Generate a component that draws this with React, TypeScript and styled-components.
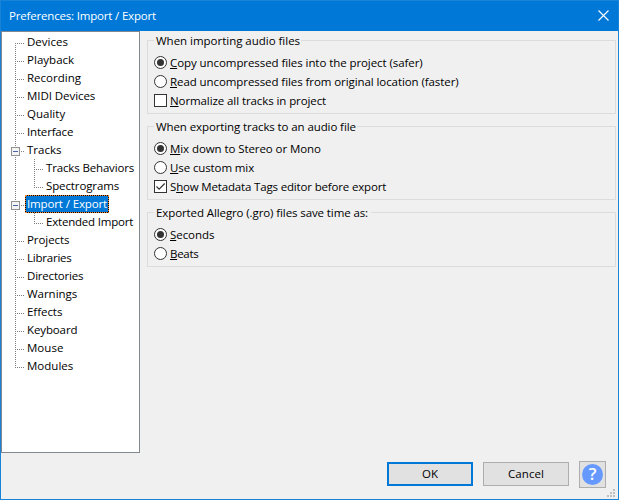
import React from 'react';
import styled, { createGlobalStyle } from 'styled-components';

const GlobalStyle = createGlobalStyle`
  * { box-sizing: border-box; }
  body {
    margin: 0;
    font: 11.5px/18px "Open Sans", "Noto Sans", sans-serif;
    color: #000;
    cursor: default;
  }
  button { font: inherit; color: inherit; padding: 0; }
`;

const Dialog = styled.main`
  width: 619px;
  height: 500px;
  display: flex;
  flex-direction: column;
  background: #f0f0f0;
  border: 1px solid #1883d7;
`;

const TitleBar = styled.header`
  height: 30px;
  flex: none;
  display: flex;
  align-items: center;
  justify-content: space-between;
  padding: 0 9px 1px 8px;
  background: #0078d7;
  color: #fff;
`;

const Text = styled.span<{ $track?: number }>`
  white-space: pre;
  letter-spacing: ${(p) => p.$track ?? 0}px;
`;

const CloseButton = styled.button`
  display: flex;
  margin-bottom: 1px;
  border: 0;
  background: none;
  color: #fff;
`;

const Body = styled.div`
  height: 422px;
  flex: none;
  display: flex;
  gap: 7px;
`;

const Tree = styled.nav`
  width: 139px;
  padding-top: 1px;
  background: #fff;
  border: 1px solid #828790;
`;

const TreeRow = styled.div`
  height: 18px;
  display: flex;
  padding-left: 9px;
`;

const Guides = styled.svg`
  flex: none;
  display: block;
`;

const TreeLabel = styled.span<{ $selected?: boolean }>`
  height: 18px;
  display: flex;
  padding: 0 2px;
  ${(p) =>
    p.$selected &&
    `
    width: 84px;
    background: #0078d7;
    color: #fff;
    box-shadow: inset 0 0 0 1px #000;
    outline: 1px dotted #ff8728;
    outline-offset: -1px;
  `}
`;

const Page = styled.section`
  flex: 1;
  display: flex;
  flex-direction: column;
  gap: 12px;
  padding: 9px 2px 0 0;
`;

const Group = styled.section<{ $height: number }>`
  height: ${(p) => p.$height}px;
  padding: 0 6px;
  border: 1px solid #dcdcdc;
`;

const GroupTitle = styled.h2<{ $width: number }>`
  width: ${(p) => p.$width}px;
  height: 18px;
  margin: -9px 0 3px;
  padding-left: 2px;
  font-size: inherit;
  font-weight: normal;
  background: #f0f0f0;
`;

const Option = styled.label`
  height: 19px;
  display: flex;
  align-items: center;
  gap: 3px;
`;

const Mnemonic = styled.span`
  text-decoration: underline;
  text-decoration-thickness: 1px;
  text-underline-offset: 1px;
  text-decoration-skip-ink: none;
`;

const Footer = styled.footer`
  flex: 1;
  display: flex;
  align-items: flex-start;
  justify-content: flex-end;
  gap: 10px;
  padding-top: 9px;
`;

const PushButton = styled.button<{ $primary?: boolean }>`
  width: 86px;
  height: 24px;
  display: flex;
  align-items: center;
  justify-content: center;
  background: #e1e1e1;
  border: ${(p) => (p.$primary ? '2px solid #0078d7' : '1px solid #adadad')};
`;

const HelpButton = styled(PushButton)`
  width: 27px;
  height: 27px;
  margin-top: -1px;
`;

const HelpBadge = styled.span`
  width: 21px;
  height: 21px;
  border-radius: 50%;
  background: #6699ff;
  color: #fff;
  font-size: 17px;
  font-weight: 600;
  line-height: 20px;
  text-align: center;
`;

const Grip = styled.svg`
  align-self: flex-end;
  margin: 0 3px 2px -9px;
`;

interface Item {
  text: string;
  track: number;
  child?: boolean;
  branch?: boolean;
  selected?: boolean;
  lastChild?: boolean;
}

const items: Item[] = [
  { text: 'Devices', track: 0.01 },
  { text: 'Playback', track: 0.03 },
  { text: 'Recording', track: 0.02 },
  { text: 'MIDI Devices', track: -0.06 },
  { text: 'Quality', track: 0.02 },
  { text: 'Interface', track: -0.17 },
  { text: 'Tracks', track: 0 },
  { text: 'Tracks Behaviors', track: -0.15, child: true },
  { text: 'Spectrograms', track: -0.12, child: true, lastChild: true },
  { text: 'Import / Export', track: -0.13, branch: true, selected: true },
  { text: 'Extended Import', track: -0.2, child: true, lastChild: true },
  { text: 'Projects', track: -0.06 },
  { text: 'Libraries', track: -0.22 },
  { text: 'Directories', track: -0.2 },
  { text: 'Warnings', track: -0.03 },
  { text: 'Effects', track: -0.05 },
  { text: 'Keyboard', track: -0.12 },
  { text: 'Mouse', track: 0.03 },
  { text: 'Modules', track: 0.02 },
].map((item) => (item.text === 'Tracks' ? { ...item, branch: true } : item));

function TreeGuides({ item, first, last }: { item: Item; first: boolean; last: boolean }) {
  const width = item.child ? 33 : 14;
  return (
    <Guides width={width} height={18} shapeRendering="crispEdges">
      <g stroke="#808080" strokeDasharray="1 1" fill="none">
        <path d={`M4.5 ${first ? 10 : 0}V${last ? 11 : 18}`} />
        {item.child && <path d={`M23.5 0V${item.lastChild ? 11 : 18}`} />}
        <path d={item.child ? 'M23 10.5h9' : 'M4 10.5h9'} />
      </g>
      {item.branch && (
        <>
          <rect x={0.5} y={6.5} width={8} height={8} fill="#f4f4f4" stroke="#919191" />
          <path d="M2 10.5h5" stroke="#4b63a7" />
        </>
      )}
    </Guides>
  );
}

function Mark({ kind, on }: { kind: 'radio' | 'check'; on?: boolean }) {
  return (
    <svg width={13} height={13} viewBox="0 0 13 13">
      {kind === 'radio' ? (
        <>
          <circle cx={6.5} cy={6.5} r={6} fill="#fff" stroke="#333" />
          {on && <circle cx={6.5} cy={6.5} r={3.5} fill="#333" />}
        </>
      ) : (
        <>
          <rect x={0.5} y={0.5} width={12} height={12} fill="#fff" stroke="#333" />
          {on && <path d="M2.5 6.5L5.1 9.1L10.7 3.5" fill="none" stroke="#333" strokeWidth={1.2} />}
        </>
      )}
    </svg>
  );
}

interface Choice {
  kind: 'radio' | 'check';
  on?: boolean;
  before?: string;
  key: string;
  after: string;
  track: number;
}

const groups: { title: string; track: number; width: number; height: number; choices: Choice[] }[] = [
  {
    title: 'When importing audio files', track: -0.02, width: 147, height: 74,
    choices: [
      { kind: 'radio', on: true, key: 'C', after: 'opy uncompressed files into the project (safer)', track: -0.075 },
      { kind: 'radio', key: 'R', after: 'ead uncompressed files from original location (faster)', track: -0.08 },
      { kind: 'check', key: 'N', after: 'ormalize all tracks in project', track: -0.09 },
    ],
  },
  {
    title: 'When exporting tracks to an audio file', track: -0.1, width: 203, height: 74,
    choices: [
      { kind: 'radio', on: true, key: 'M', after: 'ix down to Stereo or Mono', track: -0.08 },
      { kind: 'radio', key: 'U', after: 'se custom mix', track: -0.11 },
      { kind: 'check', on: true, before: 'S', key: 'h', after: 'ow Metadata Tags editor before export', track: -0.165 },
    ],
  },
  {
    title: 'Exported Allegro (.gro) files save time as:', track: -0.1, width: 217, height: 55,
    choices: [
      { kind: 'radio', on: true, key: 'S', after: 'econds', track: -0.06 },
      { kind: 'radio', key: 'B', after: 'eats', track: -0.3 },
    ],
  },
];

export default function App() {
  return (
    <>
      <GlobalStyle />
      <Dialog>
        <TitleBar>
          <Text $track={-0.18}>Preferences: Import / Export</Text>
          <CloseButton aria-label="Close">
            <svg width={11} height={11} viewBox="0 0 11 11">
              <path d="M.5 .5l10 10M10.5 .5l-10 10" stroke="currentColor" strokeWidth={1.1} />
            </svg>
          </CloseButton>
        </TitleBar>
        <Body>
          <Tree>
            {items.map((item, i) => (
              <TreeRow key={item.text}>
                <TreeGuides item={item} first={i === 0} last={i === items.length - 1} />
                <TreeLabel $selected={item.selected}>
                  <Text $track={item.track}>{item.text}</Text>
                </TreeLabel>
              </TreeRow>
            ))}
          </Tree>
          <Page>
            {groups.map((g) => (
              <Group key={g.title} $height={g.height}>
                <GroupTitle $width={g.width}>
                  <Text $track={g.track}>{g.title}</Text>
                </GroupTitle>
                {g.choices.map((c) => (
                  <Option key={c.after}>
                    <Mark kind={c.kind} on={c.on} />
                    <Text $track={c.track}>
                      {c.before}
                      <Mnemonic>{c.key}</Mnemonic>
                      {c.after}
                    </Text>
                  </Option>
                ))}
              </Group>
            ))}
          </Page>
        </Body>
        <Footer>
          <PushButton $primary>
            <Text>OK</Text>
          </PushButton>
          <PushButton>
            <Text $track={0.1}>Cancel</Text>
          </PushButton>
          <HelpButton aria-label="Help">
            <HelpBadge>?</HelpBadge>
          </HelpButton>
          <Grip width={8} height={8} fill="#bfbfbf" shapeRendering="crispEdges">
            <path d="M6 0h2v2h-2zM3 3h2v2h-2zM6 3h2v2h-2zM0 6h2v2h-2zM3 6h2v2h-2zM6 6h2v2h-2z" />
          </Grip>
        </Footer>
      </Dialog>
    </>
  );
}
